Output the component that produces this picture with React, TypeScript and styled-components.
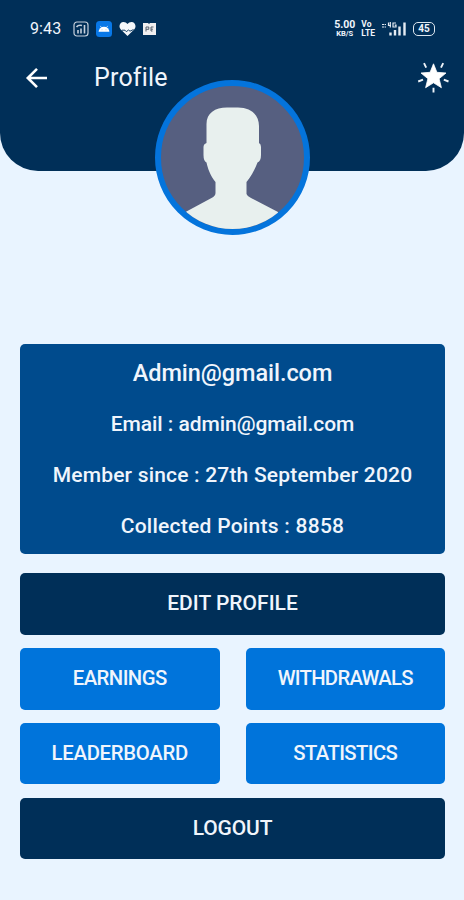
import React from "react";
import styled, { createGlobalStyle } from "styled-components";

const GlobalStyle = createGlobalStyle`
  * { box-sizing: border-box; }
  body { margin: 0; background: #e9f4ff; }
  button { border: 0; margin: 0; padding: 0; background: none; font: inherit; color: inherit; cursor: pointer; }
  svg { display: block; }
`;

const Screen = styled.div`
  width: 464px;
  height: 900px;
  overflow: hidden;
  background: #e9f4ff;
  color: #f0f5fc;
  font-family: Roboto, "Noto Sans", sans-serif;
`;

const Header = styled.header`
  position: relative;
  height: 171px;
  background: #002f58;
  border-radius: 0 0 38px 38px;
`;

const StatusBar = styled.div`
  display: flex;
  align-items: center;
  justify-content: space-between;
  height: 58px;
  padding: 0 29px 0 30px;
`;

const StatusGroup = styled.div<{ $gap: number }>`
  display: flex;
  align-items: center;
  gap: ${(p) => p.$gap}px;
`;

const Clock = styled.span`
  width: 35.5px;
  font-size: 16px;
  line-height: 20px;
  letter-spacing: 0.1px;
  white-space: nowrap;
`;

const Stack = styled.span<{ $align?: string }>`
  display: flex;
  flex-direction: column;
  align-items: ${(p) => p.$align ?? "center"};
  font-weight: 700;
  white-space: nowrap;
`;

const StackText = styled.span<{ $size: number }>`
  font-size: ${(p) => p.$size}px;
  line-height: 9px;
`;

const Battery = styled.span`
  width: 22px;
  height: 14px;
  border: 1.5px solid #dce6ef;
  border-radius: 5px;
  font-size: 10px;
  font-weight: 700;
  line-height: 12px;
  text-align: center;
`;

const AppBar = styled.div`
  display: flex;
  align-items: center;
  height: 40px;
  padding: 0 14px 0 24px;
`;

const Title = styled.h1`
  flex: 1;
  margin: 0 0 0 45px;
  font-size: 25px;
  font-weight: 400;
  line-height: 32px;
  letter-spacing: 0.2px;
`;

const Avatar = styled.div`
  position: absolute;
  left: 155px;
  top: 80px;
  width: 155px;
  height: 155px;
  border: 6px solid #0474dc;
  border-radius: 50%;
  background: #565f80;
  overflow: hidden;
`;

const Content = styled.main`
  display: flex;
  flex-direction: column;
  gap: 13.4px;
  padding: 172.5px 19px 0 20px;
`;

const InfoCard = styled.section`
  display: flex;
  flex-direction: column;
  align-items: center;
  height: 210px;
  margin-bottom: 6.6px;
  padding-top: 3.6px;
  border-radius: 5px;
  background: #004b8d;
`;

const InfoLine = styled.p<{ $size?: number; $track?: number }>`
  display: flex;
  align-items: center;
  height: 51px;
  margin: 0;
  font-size: ${(p) => p.$size ?? 21}px;
  font-weight: 500;
  letter-spacing: ${(p) => p.$track ?? 0}px;
  white-space: nowrap;
`;

const ButtonRow = styled.div`
  display: grid;
  grid-template-columns: 1fr 1fr;
  gap: 26px;
`;

const ActionButton = styled.button<{ $primary?: boolean; $track?: number }>`
  height: 61.4px;
  padding-bottom: 1.5px;
  border-radius: 5px;
  background: ${(p) => (p.$primary ? "#0074db" : "#002f58")};
  font-size: ${(p) => (p.$primary ? 20.3 : 21)}px;
  font-weight: 500;
  letter-spacing: ${(p) => p.$track ?? 0}px;
  white-space: nowrap;
`;

const StatsIcon = () => (
  <svg width="16" height="16" viewBox="0 0 16 16" fill="none" stroke="#c5d0dc" strokeWidth="1.2">
    <rect x="1" y="1" width="14" height="14" rx="3" />
    <path d="M5 12.5V9M8 12.5V7.5M11.5 12.5V4M3.5 6Q5.5 3.5 9 4.5" strokeWidth="1.6" />
  </svg>
);

const AndroidIcon = () => (
  <svg width="16" height="16" viewBox="0 0 16 16">
    <rect width="16" height="16" rx="3.5" fill="#0878e8" />
    <path d="M2.6 10.8A5.4 5.1 0 0 1 13.4 10.8Z" fill="#fff" />
    <path d="M4.3 4.9 5.5 6.7M11.7 4.9 10.5 6.7" stroke="#fff" strokeWidth=".7" />
    <circle cx="6" cy="8.8" r=".4" fill="#0878e8" />
    <circle cx="10" cy="8.8" r=".4" fill="#0878e8" />
  </svg>
);

const HeartIcon = () => (
  <svg width="17" height="16" viewBox="0 0 17 16">
    <path d="M8.5 15 1.6 8.3C-.9 5.4 1.1 1 4.5 1 6.2 1 7.5 1.7 8.5 3 9.5 1.7 10.8 1 12.5 1 15.9 1 17.9 5.4 15.4 8.3Z" fill="#f4f7fa" />
    <path d="M3 9.2H6L7.3 10.7 9.5 9 11 10.2 14.5 8.5" fill="none" stroke="#002f58" strokeWidth=".9" />
  </svg>
);

const NoteIcon = () => (
  <svg width="13" height="14" viewBox="0 0 13 14">
    <path d="M0 1H5L6 2 7 1H13V13H0Z" fill="#f0eff0" />
    <path d="M3 9.5V5H5.8V7.3H3M10.5 5H8V9H9.5M8 7.200H10" fill="none" stroke="#56606c" strokeWidth="1" />
  </svg>
);

const SignalIcon = () => (
  <svg width="26" height="16" viewBox="0 0 26 16" stroke="#e4ebf3" fill="none">
    <path d="M1 3.5H5M1 6H5" strokeWidth="1.2" strokeDasharray="2 .6" />
    <path d="M7.5 1.5V4.5H10M9.3 1V6.5M15 2H12V6H15V4.2H13.7" strokeWidth="1.2" />
    <path d="M9.5 14.5V11.5M14 14.5V9M18.5 14.5V5.5M23.5 14.5V1.5" strokeWidth="2.4" />
  </svg>
);

const BackIcon = () => (
  <svg width="25" height="24" viewBox="0 0 25 24" fill="none" stroke="#fff" strokeWidth="2.6">
    <path d="M23 12H4M13 2.8 3.8 12 13 21.2" />
  </svg>
);

const StarIcon = () => (
  <svg width="34" height="34" viewBox="0 0 34 34">
    <path
      d="M17.5 2.800 20.9 11.300 30 12 23.1 17.700 25.4 26.700 17.5 21.800 9.6 26.700 11.9 17.700 5 12 14.1 11.300Z"
      fill="#fff" stroke="#fff" strokeWidth=".8" strokeLinejoin="round"
    />
    <path
      d="M8 2.200 10.2 6.600M27.2 2.200 25 6.600M2.2 20.500 7 18.600M32.5 20.500 27.8 18.600M17.5 26.800V31.500"
      fill="none" stroke="#edf3f8" strokeWidth="1.9"
    />
  </svg>
);

const Silhouette = () => (
  <svg width="143" height="143" viewBox="0 0 143 143">
    <path
      fill="#e8f0ee"
      d="M45.5 49.5V38C45.5 27 54 21.5 66 21.5H77C89 21.5 98 28 98 40V57Q100 58 100 61V69Q100 75 96.500 76.500C94 83 91 89 85.500 96V108Q86 110 90 112L117 126V145H24.500V126L50.500 112Q54.500 110 54.500 107V96C49 89 47 83 45.500 76.500Q42.500 75 42.500 69V61Q42.500 58 45.500 57Z"
    />
  </svg>
);

export default function App() {
  return (
    <>
      <GlobalStyle />
      <Screen>
        <Header>
          <StatusBar>
            <StatusGroup $gap={7}>
              <Clock>9:43</Clock>
              <StatsIcon />
              <AndroidIcon />
              <HeartIcon />
              <NoteIcon />
            </StatusGroup>
            <StatusGroup $gap={6}>
              <Stack>
                <StackText $size={10.5}>5.00</StackText>
                <StackText $size={7.5}>KB/S</StackText>
              </Stack>
              <Stack $align="flex-start">
                <StackText $size={8.5}>Vo</StackText>
                <StackText $size={8.5}>LTE</StackText>
              </Stack>
              <SignalIcon />
              <Battery>45</Battery>
            </StatusGroup>
          </StatusBar>
          <AppBar>
            <button aria-label="Back"><BackIcon /></button>
            <Title>Profile</Title>
            <button aria-label="Favorites"><StarIcon /></button>
          </AppBar>
          <Avatar><Silhouette /></Avatar>
        </Header>
        <Content>
          <InfoCard>
            <InfoLine $size={23.5} $track={-0.06}>Admin@gmail.com</InfoLine>
            <InfoLine $track={-0.05}>Email : admin@gmail.com</InfoLine>
            <InfoLine $track={0.19}>Member since : 27th September 2020</InfoLine>
            <InfoLine $track={0.26}>Collected Points : 8858</InfoLine>
          </InfoCard>
          <ActionButton>EDIT PROFILE</ActionButton>
          <ButtonRow>
            <ActionButton $primary $track={-0.55}>EARNINGS</ActionButton>
            <ActionButton $primary $track={-0.73}>WITHDRAWALS</ActionButton>
          </ButtonRow>
          <ButtonRow>
            <ActionButton $primary $track={-0.28}>LEADERBOARD</ActionButton>
            <ActionButton $primary $track={-0.6}>STATISTICS</ActionButton>
          </ButtonRow>
          <ActionButton $track={-0.15}>LOGOUT</ActionButton>
        </Content>
      </Screen>
    </>
  );
}
